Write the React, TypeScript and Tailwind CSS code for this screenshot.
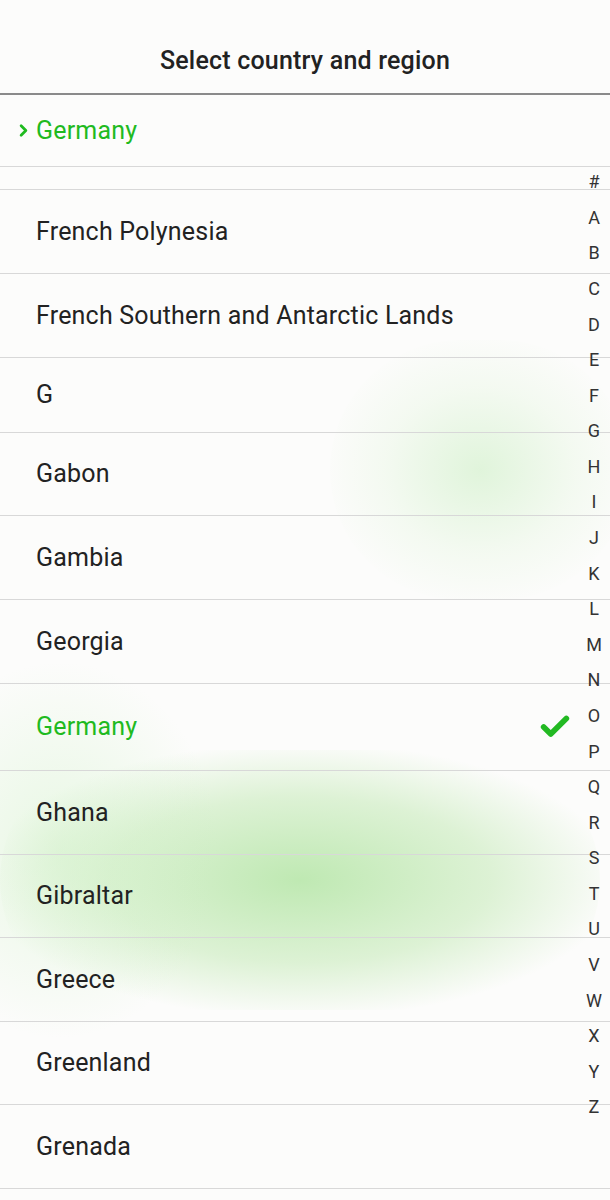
import { Check, ChevronRight } from "lucide-react";

const rows: { name: string; h: string; selected?: boolean }[] = [
  { name: "French Polynesia", h: "h-[84px]" },
  { name: "French Southern and Antarctic Lands", h: "h-[84px]" },
  { name: "G", h: "h-[75px]" },
  { name: "Gabon", h: "h-[83px]" },
  { name: "Gambia", h: "h-[84px]" },
  { name: "Georgia", h: "h-[84px]" },
  { name: "Germany", h: "h-[87px]", selected: true },
  { name: "Ghana", h: "h-[84px]" },
  { name: "Gibraltar", h: "h-[83px]" },
  { name: "Greece", h: "h-[84px]" },
  { name: "Greenland", h: "h-[83px]" },
  { name: "Grenada", h: "h-[84px]" },
];

const letters = "#ABCDEFGHIJKLMNOPQRSTUVWXYZ".split("");

const App = () => {
  return (
    <div
      className="relative w-[610px] h-[1200px] overflow-hidden bg-[#fcfcfb] text-[#222]"
      style={{ fontFamily: "Roboto, 'Liberation Sans', sans-serif" }}
    >
      {/* soft green glows behind the list */}
      <div className="pointer-events-none absolute left-[0px] top-[750px] w-[600px] h-[260px] rounded-full bg-[radial-gradient(ellipse_at_center,rgba(150,220,130,0.6)_0%,rgba(170,225,150,0.38)_45%,rgba(200,240,190,0)_75%)]" />
      <div className="pointer-events-none absolute left-[330px] top-[340px] w-[300px] h-[260px] rounded-full bg-[radial-gradient(ellipse_at_center,rgba(190,235,180,0.45)_0%,rgba(210,240,200,0.2)_45%,rgba(220,245,215,0)_75%)]" />
      <div className="pointer-events-none absolute left-[-100px] top-[660px] w-[320px] h-[380px] rounded-full bg-[radial-gradient(ellipse_at_center,rgba(200,240,190,0.4)_0%,rgba(220,245,215,0)_70%)]" />

      <div className="relative">
        {/* Header */}
        <div className="h-[95px] flex items-center justify-center border-b-2 border-[#8a8a8a]">
          <h1 className="text-[25px] font-medium tracking-[0.2px] text-[#222] mt-[28px]">Select country and region</h1>
        </div>

        {/* Current selection */}
        <div className="h-[72px] flex items-center border-b border-[#d8d8d8]">
          <ChevronRight className="ml-[14px] w-[19px] h-[19px] text-[#1fba1f]" strokeWidth={3.5} />
          <span className="ml-[3px] text-[25px] tracking-[0.2px] text-[#1fba1f]">Germany</span>
        </div>
        <div className="h-[23px] border-b border-[#d8d8d8]" />

        {/* List */}
        {rows.map((r) => (
          <div key={r.name} className={`${r.h} flex items-center border-b border-[#d8d8d8]`}>
            <span
              className={`ml-[36px] text-[25px] tracking-[0.2px] ${r.selected ? "text-[#1fba1f]" : "text-[#222]"}`}
            >
              {r.name}
            </span>
            {r.selected && (
              <Check className="ml-auto mr-[38px] w-[34px] h-[34px] text-[#22b922]" strokeWidth={4} />
            )}
          </div>
        ))}
      </div>

      {/* Alphabet index */}
      <div className="absolute right-0 top-[164px] w-[32px] flex flex-col items-center">
        {letters.map((l) => (
          <div key={l} className="h-[35.58px] flex items-center justify-center text-[18px] text-[#333]">
            {l}
          </div>
        ))}
      </div>
    </div>
  );
};

export default App;
